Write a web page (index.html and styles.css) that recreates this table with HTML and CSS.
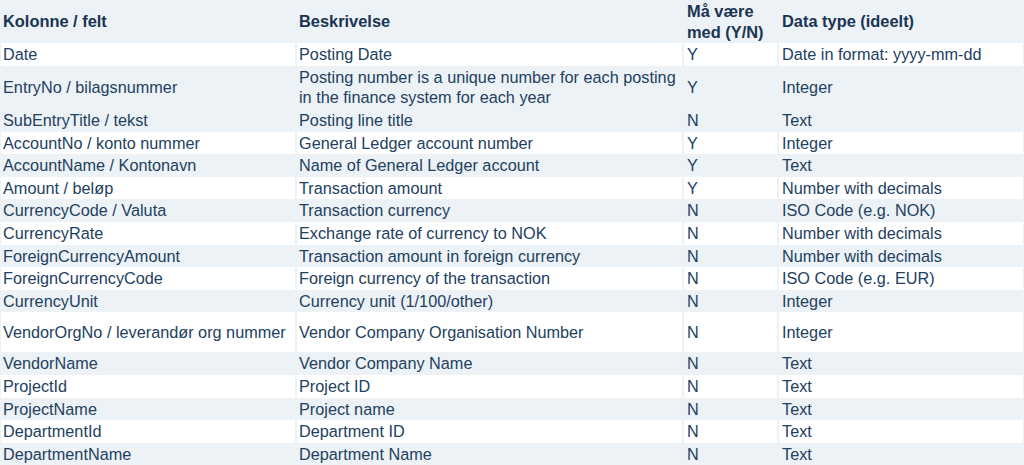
FILE: index.html
```html
<!DOCTYPE html>
<html lang="no">
<head>
<meta charset="utf-8">
<title>Kolonner</title>
<link rel="stylesheet" href="styles.css">
</head>
<body>
<table class="spec">
  <colgroup>
    <col class="c-field">
    <col class="c-desc">
    <col class="c-req">
    <col class="c-type">
  </colgroup>
  <thead>
    <tr class="head">
      <th>Kolonne / felt</th>
      <th>Beskrivelse</th>
      <th>Må være<br>med (Y/N)</th>
      <th>Data type (ideelt)</th>
    </tr>
  </thead>
  <tbody>
    <tr class="w"><td>Date</td><td>Posting Date</td><td>Y</td><td>Date in format: yyyy-mm-dd</td></tr>
    <tr class="g"><td>EntryNo / bilagsnummer</td><td>Posting number is a unique number for each posting in the finance system for each year</td><td>Y</td><td>Integer</td></tr>
    <tr class="g"><td>SubEntryTitle / tekst</td><td>Posting line title</td><td>N</td><td>Text</td></tr>
    <tr class="w"><td>AccountNo / konto nummer</td><td>General Ledger account number</td><td>Y</td><td>Integer</td></tr>
    <tr class="g"><td>AccountName / Kontonavn</td><td>Name of General Ledger account</td><td>Y</td><td>Text</td></tr>
    <tr class="w"><td>Amount / beløp</td><td>Transaction amount</td><td>Y</td><td>Number with decimals</td></tr>
    <tr class="g"><td>CurrencyCode / Valuta</td><td>Transaction currency</td><td>N</td><td>ISO Code (e.g. NOK)</td></tr>
    <tr class="w"><td>CurrencyRate</td><td>Exchange rate of currency to NOK</td><td>N</td><td>Number with decimals</td></tr>
    <tr class="g"><td>ForeignCurrencyAmount</td><td>Transaction amount in foreign currency</td><td>N</td><td>Number with decimals</td></tr>
    <tr class="w"><td>ForeignCurrencyCode</td><td>Foreign currency of the transaction</td><td>N</td><td>ISO Code (e.g. EUR)</td></tr>
    <tr class="g"><td>CurrencyUnit</td><td>Currency unit (1/100/other)</td><td>N</td><td>Integer</td></tr>
    <tr class="w tall"><td>VendorOrgNo / leverandør org nummer</td><td>Vendor Company Organisation Number</td><td>N</td><td>Integer</td></tr>
    <tr class="g"><td>VendorName</td><td>Vendor Company Name</td><td>N</td><td>Text</td></tr>
    <tr class="w"><td>ProjectId</td><td>Project ID</td><td>N</td><td>Text</td></tr>
    <tr class="g"><td>ProjectName</td><td>Project name</td><td>N</td><td>Text</td></tr>
    <tr class="w"><td>DepartmentId</td><td>Department ID</td><td>N</td><td>Text</td></tr>
    <tr class="g"><td>DepartmentName</td><td>Department Name</td><td>N</td><td>Text</td></tr>
  </tbody>
</table>
</body>
</html>
```
FILE: styles.css
```css
html, body {
  margin: 0;
  padding: 0;
  background: #ffffff;
}

.spec {
  width: 1026px;
  margin-left: -1px;
  table-layout: fixed;
  border-collapse: separate;
  border-spacing: 2px 0;
  background: #edf2f6;
  font-family: "Liberation Sans", Arial, sans-serif;
  font-size: 16.25px;
  line-height: 20.6px;
  color: #22405f;
}

.c-field { width: 294px; }
.c-desc { width: 385px; }
.c-req { width: 93px; }
.c-type { width: 244px; }

.spec th,
.spec td {
  padding: 1px 2px 1px 2px;
  text-align: left;
  vertical-align: middle;
}

.spec th {
  font-size: 16.4px;
  font-weight: bold;
  color: #1a3453;
  background: #edf2f6;
}

.spec td:nth-child(3),
.spec td:nth-child(4),
.spec th:nth-child(3),
.spec th:nth-child(4) {
  padding-left: 3px;
}

.w td { background: #ffffff; }
.g td { background: #edf2f6; }

.tall td { height: 38px; }
```
